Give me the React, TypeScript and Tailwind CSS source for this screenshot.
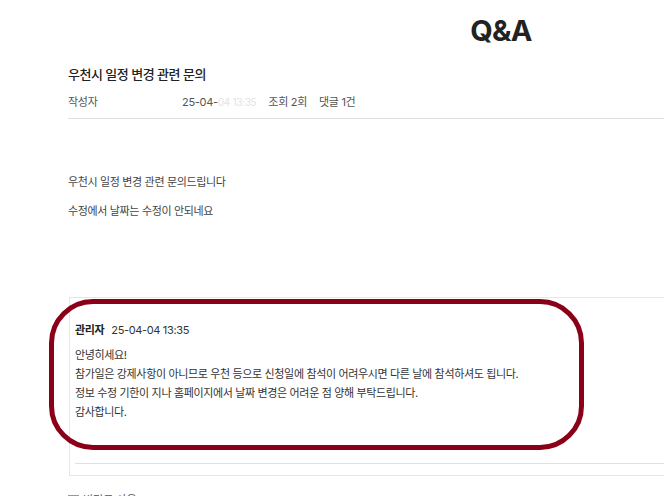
import React from "react";

const font = { fontFamily: '"Inter", "Noto Sans CJK KR", sans-serif' };

const App: React.FC = () => {
  return (
    <div
      className="w-[664px] h-[496px] overflow-hidden bg-white text-[#333]"
      style={font}
    >
      <div className="w-[866px] ml-[68px]">
        <h1 className="pt-[13px] text-center text-[29px] leading-[36px] font-bold text-[#222] tracking-tight">
          Q&amp;A
        </h1>

        <div className="mt-[15px] text-[13px] leading-[20px] font-medium tracking-[-0.5px] text-[#222]">
          우천시 일정 변경 관련 문의
        </div>
        <div className="mt-[10px] flex items-center text-[11px] leading-[16px] tracking-[-0.3px] text-[#555]">
          <span className="w-[114px]">작성자</span>
          <span>
            25-04-<span className="text-[10px] text-[#e3e3e3]">04 13:35</span>
          </span>
          <span className="ml-[12px]">조회 2회</span>
          <span className="ml-[12px]">댓글 1건</span>
        </div>
        <div className="mt-[8px] border-t border-[#dedede]" />

        <div className="pt-[55px] text-[11px] leading-[16px] tracking-[-0.35px] text-[#444]">
          <p>우천시 일정 변경 관련 문의드립니다</p>
          <p className="mt-[13px]">수정에서 날짜는 수정이 안되네요</p>
        </div>

        <div className="relative mt-[78px] ml-[1px] border border-[#e6e6e6] pb-[11px]">
          <div className="pl-[5px] pt-[23px] text-[11px] leading-[19px] tracking-[-0.35px] text-[#333]">
            <div className="flex items-center gap-[7px]">
              <span className="font-bold text-[#222]">관리자</span>
              <span>25-04-04 13:35</span>
            </div>
            <p className="mt-[6px]">안녕히세요!</p>
            <p>
              참가일은 강제사항이 아니므로 우천 등으로 신청일에 참석이 어려우시면 다른 날에 참석하셔도 됩니다.
            </p>
            <p>정보 수정 기한이 지나 홈페이지에서 날짜 변경은 어려운 점 양해 부탁드립니다.</p>
            <p>감사합니다.</p>
          </div>
          <div className="mt-[41px] ml-[5px] border-t border-[#e0e0e0]" />
          <div className="absolute left-[-21px] top-[1px] w-[535px] h-[151px] rounded-[44px] border-[5px] border-[#8b0019] pointer-events-none" />
        </div>

        <div className="mt-[16px] flex items-center gap-[4px] text-[11px] leading-[16px] text-[#555]">
          <span className="inline-block w-[11px] h-[11px] border border-[#999]" />
          <span>비밀글 사용</span>
        </div>
      </div>
    </div>
  );
};

export default App;
